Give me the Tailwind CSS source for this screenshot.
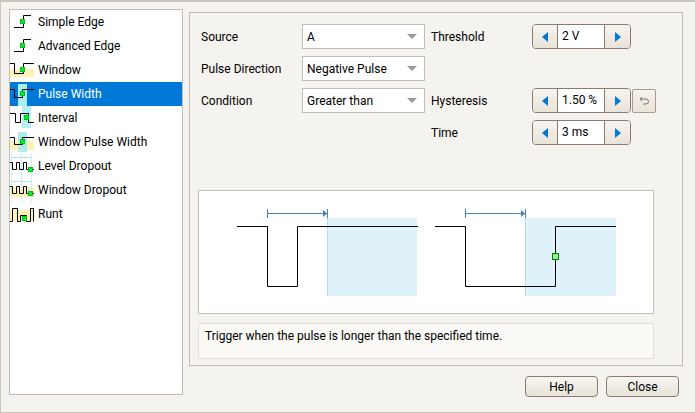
<!DOCTYPE html>
<html lang="en">
<head>
    <meta charset="UTF-8">
    <title>Trigger</title>
    <script src="https://cdn.jsdelivr.net/npm/@tailwindcss/browser@4"></script>
</head>
<body class="w-[695px] h-[413px] overflow-hidden bg-[#f4f3ef] font-['Roboto','Open_Sans',sans-serif] text-[12px] text-black">
    <div class="h-[413px] border-t-2 border-l border-b border-[#c9c4be] pt-[7px] pl-[8px] pr-[11px]">
        <div class="flex gap-[6px] h-[357px] items-start">
            <!-- Trigger type list -->
            <div class="w-[174px] h-[386px] shrink-0 border border-[#c4bdb5] bg-white">
                <div class="h-[24px] flex items-center">
                    <svg width="28" height="24" viewBox="0 0 28 24" fill="none">
                        <path d="M4 17.5H13.5V5.5H21" stroke="#000"/>
                        <rect x="10.5" y="9.5" width="4" height="4" fill="#00f020" stroke="#00c020"/>
                    </svg>
                    <span>Simple Edge</span>
                </div>
                <div class="h-[24px] flex items-center">
                    <svg width="28" height="24" viewBox="0 0 28 24" fill="none">
                        <path d="M4 17.5H13.5V5.5H21" stroke="#000"/>
                        <rect x="10.5" y="9.5" width="4" height="4" fill="#00f020" stroke="#00c020"/>
                    </svg>
                    <span>Advanced Edge</span>
                </div>
                <div class="h-[24px] flex items-center">
                    <svg width="28" height="24" viewBox="0 0 28 24" fill="none">
                        <rect x="0" y="11" width="24" height="8" fill="#fdf3b4"/>
                        <path d="M0 5.5H4.5V15.5H13.5V5.5H24" stroke="#000"/>
                        <rect x="10.5" y="9.5" width="4" height="4" fill="#00f020" stroke="#00c020"/>
                    </svg>
                    <span>Window</span>
                </div>
                <div class="h-[24px] flex items-center bg-[#0078d7] text-white">
                    <svg width="28" height="24" viewBox="0 0 28 24" fill="none">
                        <rect x="8" y="2" width="9" height="22" fill="#a9eef5"/>
                        <path d="M0 7.5H4.5V15.5H12.5V7.5H24" stroke="#000"/>
                        <rect x="10.5" y="9.5" width="4" height="4" fill="#00f020" stroke="#00c020"/>
                    </svg>
                    <span>Pulse Width</span>
                </div>
                <div class="h-[24px] flex items-center">
                    <svg width="28" height="24" viewBox="0 0 28 24" fill="none">
                        <rect x="12" y="0" width="9" height="22" fill="#b6f0f5"/>
                        <path d="M0 7.5H5.5V16.5H10.5V7.5H18.5V16.5H24" stroke="#000"/>
                        <rect x="14.5" y="9.5" width="4" height="4" fill="#00f020" stroke="#00c020"/>
                    </svg>
                    <span>Interval</span>
                </div>
                <div class="h-[24px] flex items-center">
                    <svg width="28" height="24" viewBox="0 0 28 24" fill="none">
                        <rect x="0" y="11" width="24" height="9" fill="#fdf3b4"/>
                        <rect x="8" y="2" width="9" height="20" fill="#b0ecec"/>
                        <path d="M0 7.5H4.5V14.5H12.5V7.5H24" stroke="#000"/>
                        <rect x="10.5" y="9.5" width="4" height="4" fill="#00f020" stroke="#00c020"/>
                    </svg>
                    <span>Window Pulse Width</span>
                </div>
                <div class="h-[24px] flex items-center">
                    <svg width="28" height="24" viewBox="0 0 28 24" fill="none">
                        <path d="M1.5 0V24M11.5 0V24M21.5 0V24" stroke="#c8f0f8"/>
                        <path d="M1 3.5H21" stroke="#a8e4f4"/>
                        <path d="M0 8.5H2.5V15.5H6.5V8.5H9.5V15.5H13.5V8.5H16.5V15.5H24" stroke="#000"/>
                        <rect x="18.5" y="13.5" width="4" height="4" fill="#00f020" stroke="#00c020"/>
                    </svg>
                    <span>Level Dropout</span>
                </div>
                <div class="h-[24px] flex items-center">
                    <svg width="28" height="24" viewBox="0 0 28 24" fill="none">
                        <rect x="0" y="9" width="24" height="10" fill="#fdf3b4"/>
                        <path d="M1.5 0V24M11.5 0V24M21.5 0V24" stroke="#c8f0f8"/>
                        <path d="M1 3.5H21" stroke="#a8e4f4"/>
                        <path d="M0 8.5H2.5V15.5H6.5V8.5H9.5V15.5H13.5V8.5H16.5V15.5H24" stroke="#000"/>
                        <rect x="18.5" y="13.5" width="4" height="4" fill="#00f020" stroke="#00c020"/>
                    </svg>
                    <span>Window Dropout</span>
                </div>
                <div class="h-[24px] flex items-center">
                    <svg width="28" height="24" viewBox="0 0 28 24" fill="none">
                        <rect x="0" y="8" width="24" height="11" fill="#fdf3b4"/>
                        <path d="M0 19.5H2.5V6.5H7.5V19.5H10.5V13.5H16.5V19.5H20.5V6.5H23.5V19.5" stroke="#000"/>
                        <rect x="12.5" y="14.5" width="4" height="4" fill="#00f020" stroke="#00c020"/>
                    </svg>
                    <span>Runt</span>
                </div>
            </div>

            <!-- Settings panel -->
            <div class="w-[494px] h-[354px] mt-[3px] border border-[#c4bdb5] pt-[11px] pl-[8px] flex flex-col">
                <div class="grid grid-cols-[101px_123px_107px_99px_auto] grid-rows-[25px_25px_25px_25px] gap-y-[7px] items-center pl-[3px]">
                    <span>Source</span>
                    <div class="h-[25px] border border-[#c4bdb5] bg-white flex items-center justify-between pl-[4px] pr-[7px]">
                        <span>A</span>
                        <svg width="10" height="5" viewBox="0 0 10 5"><path d="M0 0H10L5 5Z" fill="#9a9a9a"/></svg>
                    </div>
                    <span class="pl-[6px]">Threshold</span>
                    <div class="h-[25px] flex border border-[#8c7a6e] rounded-[4px] overflow-hidden">
                        <button class="w-[24px] bg-gradient-to-b from-[#f6f4ef] to-[#e8e3d8] flex items-center justify-center">
                            <svg width="6" height="10" viewBox="0 0 6 10"><path d="M6 0V10L0 5Z" fill="#0078d7"/></svg>
                        </button>
                        <div class="flex-1 bg-white border-x border-[#8c7a6e] pl-[4px] leading-[23px]">2 V</div>
                        <button class="w-[25px] bg-gradient-to-b from-[#f6f4ef] to-[#e8e3d8] flex items-center justify-center">
                            <svg width="6" height="10" viewBox="0 0 6 10"><path d="M0 0V10L6 5Z" fill="#0078d7"/></svg>
                        </button>
                    </div>
                    <span></span>

                    <span>Pulse Direction</span>
                    <div class="h-[25px] border border-[#c4bdb5] bg-white flex items-center justify-between pl-[4px] pr-[7px]">
                        <span>Negative Pulse</span>
                        <svg width="10" height="5" viewBox="0 0 10 5"><path d="M0 0H10L5 5Z" fill="#9a9a9a"/></svg>
                    </div>
                    <span></span><span></span><span></span>

                    <span>Condition</span>
                    <div class="h-[25px] border border-[#c4bdb5] bg-white flex items-center justify-between pl-[4px] pr-[7px]">
                        <span>Greater than</span>
                        <svg width="10" height="5" viewBox="0 0 10 5"><path d="M0 0H10L5 5Z" fill="#9a9a9a"/></svg>
                    </div>
                    <span class="pl-[6px]">Hysteresis</span>
                    <div class="h-[25px] flex border border-[#8c7a6e] rounded-[4px] overflow-hidden">
                        <button class="w-[24px] bg-gradient-to-b from-[#f6f4ef] to-[#e8e3d8] flex items-center justify-center">
                            <svg width="6" height="10" viewBox="0 0 6 10"><path d="M6 0V10L0 5Z" fill="#0078d7"/></svg>
                        </button>
                        <div class="flex-1 bg-white border-x border-[#8c7a6e] pl-[4px] leading-[23px]">1.50 %</div>
                        <button class="w-[25px] bg-gradient-to-b from-[#f6f4ef] to-[#e8e3d8] flex items-center justify-center">
                            <svg width="6" height="10" viewBox="0 0 6 10"><path d="M0 0V10L6 5Z" fill="#0078d7"/></svg>
                        </button>
                    </div>
                    <button class="ml-[1px] w-[24px] h-[24px] border border-[#a89a8e] rounded-[2px] bg-gradient-to-b from-[#f6f4ef] to-[#e8e3d8] flex items-center justify-center">
                        <svg width="10" height="10" viewBox="0 0 10 10" fill="none"><path d="M1 3H7A2 2 0 0 1 7 8H4M3 1 1 3 3 5" stroke="#777"/></svg>
                    </button>

                    <span></span><span></span>
                    <span class="pl-[6px]">Time</span>
                    <div class="h-[25px] flex border border-[#8c7a6e] rounded-[4px] overflow-hidden">
                        <button class="w-[24px] bg-gradient-to-b from-[#f6f4ef] to-[#e8e3d8] flex items-center justify-center">
                            <svg width="6" height="10" viewBox="0 0 6 10"><path d="M6 0V10L0 5Z" fill="#0078d7"/></svg>
                        </button>
                        <div class="flex-1 bg-white border-x border-[#8c7a6e] pl-[4px] leading-[23px]">3 ms</div>
                        <button class="w-[25px] bg-gradient-to-b from-[#f6f4ef] to-[#e8e3d8] flex items-center justify-center">
                            <svg width="6" height="10" viewBox="0 0 6 10"><path d="M0 0V10L6 5Z" fill="#0078d7"/></svg>
                        </button>
                    </div>
                    <span></span>
                </div>

                <!-- Timing diagram -->
                <div class="mt-[45px] w-[456px] h-[124px] border border-[#c4bdb5] bg-white">
                    <svg width="454" height="122" viewBox="199 191 454 122" fill="none">
                        <rect x="327" y="218" width="90" height="78" fill="#dff1f9"/>
                        <rect x="525" y="218" width="91" height="78" fill="#dff1f9"/>
                        <path d="M327.5 218V296M525.5 218V296" stroke="#a5d8e8" stroke-dasharray="3 1"/>
                        <path d="M267.5 209V218M327.5 209V218M465.5 209V218M525.5 209V218" stroke="#4682b4"/>
                        <path d="M268 213.5H327M466 213.5H525" stroke="#4682b4"/>
                        <path d="M323 210V217L327 213.5ZM521 210V217L525 213.5Z" fill="#4682b4"/>
                        <path d="M237 226.5H267.5V286.5H297.5V226.5H418" stroke="#000"/>
                        <path d="M435 226.5H465.5V286.5H555.5V226.5H616" stroke="#000"/>
                        <rect x="552.5" y="253.5" width="6" height="6" fill="#90ee90" stroke="#008000"/>
                    </svg>
                </div>

                <div class="mt-[9px] w-[456px] h-[36px] border border-[#e3ded3] rounded-[2px] bg-[#faf9f6] pl-[6px] pt-[3px]">Trigger when the pulse is longer than the specified time.</div>
            </div>
        </div>

        <div class="flex justify-end gap-[8px] mt-[10px] pr-[5px]">
            <button class="w-[73px] h-[21px] border border-[#8c7a6e] rounded-[4px] bg-gradient-to-b from-[#f8f6f2] to-[#e8e3d8]">Help</button>
            <button class="w-[73px] h-[21px] border border-[#8c7a6e] rounded-[4px] bg-gradient-to-b from-[#f8f6f2] to-[#e8e3d8]">Close</button>
        </div>
    </div>
</body>
</html>
